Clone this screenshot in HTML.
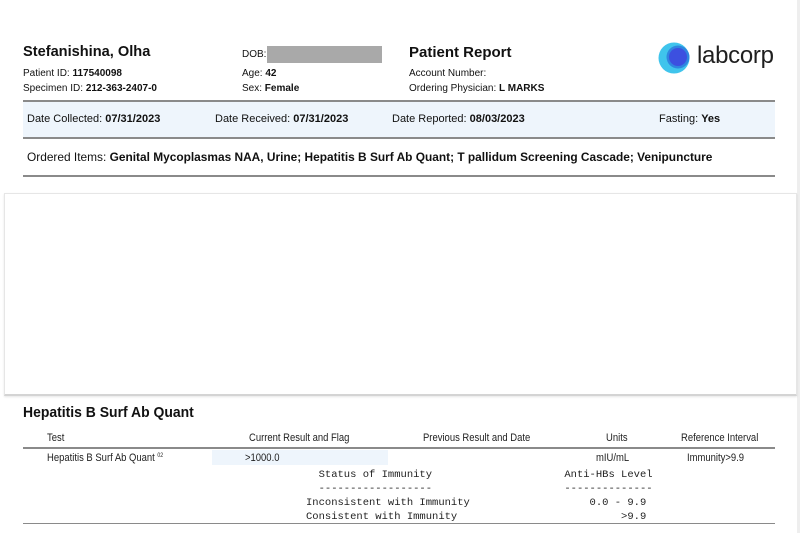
<!DOCTYPE html>
<html><head><meta charset="utf-8"><style>
*{margin:0;padding:0;box-sizing:border-box}
body{width:800px;height:533px;background:#fff;position:relative;overflow:hidden;font-family:"Liberation Sans",sans-serif;color:#111}
.a{position:absolute;white-space:nowrap}
b{font-weight:bold}
.s{font-size:10px}
.m{font-family:"Liberation Mono",monospace;font-size:10.5px;color:#222;white-space:pre}
.c{font-family:"Liberation Sans",sans-serif;font-size:11px;transform:scaleX(.86);transform-origin:left;color:#222}
.hr{position:absolute;left:23px;width:752px;height:2px;background:#8a8a8a}
</style></head><body>
<div class="a" style="right:0;top:0;width:3px;height:533px;background:#eee"></div>
<div class="a" style="left:23px;top:44px;font-size:14.6px;font-weight:bold">Stefanishina, Olha</div>
<div class="a s" style="left:23px;top:68px">Patient ID: <b>117540098</b></div>
<div class="a s" style="left:23px;top:83px">Specimen ID: <b>212-363-2407-0</b></div>
<div class="a s" style="left:242px;top:49px">DOB:</div>
<div class="a" style="left:267px;top:46px;width:115px;height:17px;background:#a9a9a9"></div>
<div class="a s" style="left:242px;top:68px">Age: <b>42</b></div>
<div class="a s" style="left:242px;top:83px">Sex: <b>Female</b></div>
<div class="a" style="left:409px;top:44px;font-size:15px;font-weight:bold">Patient Report</div>
<div class="a s" style="left:409px;top:68px">Account Number:</div>
<div class="a s" style="left:409px;top:83px">Ordering Physician: <b>L MARKS</b></div>
<svg class="a" style="left:658px;top:42px" width="34" height="34"><circle cx="16" cy="16" r="15.5" fill="#3fc4ec"/><circle cx="20" cy="15" r="11.5" fill="#2f86e0"/><circle cx="20" cy="15" r="9" fill="#3c50e0"/></svg>
<div class="a" style="left:697px;top:42px;font-size:24px;color:#1f1f1f;letter-spacing:-0.3px">labcorp</div>
<div class="hr" style="top:100px"></div>
<div class="a" style="left:23px;top:102px;width:752px;height:35px;background:#eef5fc"></div>
<div class="a" style="left:27px;top:113px;font-size:11px">Date Collected: <b>07/31/2023</b></div>
<div class="a" style="left:215px;top:113px;font-size:11px">Date Received: <b>07/31/2023</b></div>
<div class="a" style="left:392px;top:113px;font-size:11px">Date Reported: <b>08/03/2023</b></div>
<div class="a" style="left:659px;top:113px;font-size:11px">Fasting: <b>Yes</b></div>
<div class="hr" style="top:137px"></div>
<div class="a" style="left:27px;top:150px;font-size:11.9px">Ordered Items: <b>Genital Mycoplasmas NAA, Urine; Hepatitis B Surf Ab Quant; T pallidum Screening Cascade; Venipuncture</b></div>
<div class="hr" style="top:175px"></div>
<div class="a" style="left:4px;top:193px;width:793px;height:203px;border:1px solid #e6e6e6;border-bottom:2px solid #d4d4d4;box-shadow:0 1px 2px rgba(0,0,0,.1)"></div>
<div class="a" style="left:23px;top:404px;font-size:15px;font-weight:bold;transform:scaleX(.93);transform-origin:left">Hepatitis B Surf Ab Quant</div>
<div class="a c" style="left:47px;top:432px">Test</div>
<div class="a c" style="left:249px;top:432px">Current Result and Flag</div>
<div class="a c" style="left:423px;top:432px">Previous Result and Date</div>
<div class="a c" style="left:606px;top:432px">Units</div>
<div class="a c" style="left:681px;top:432px">Reference Interval</div>
<div class="hr" style="top:447px"></div>
<div class="a" style="left:212px;top:450px;width:176px;height:15px;background:#eef5fc"></div>
<div class="a c" style="left:47px;top:452px">Hepatitis B Surf Ab Quant <span style="font-size:6px;vertical-align:4px">02</span></div>
<div class="a c" style="left:245px;top:452px">&gt;1000.0</div>
<div class="a c" style="left:596px;top:452px">mIU/mL</div>
<div class="a c" style="left:687px;top:452px">Immunity&gt;9.9</div>
<div class="a m" style="left:306px;top:468px;line-height:14px">  Status of Immunity                     Anti-HBs Level
  ------------------                     --------------
Inconsistent with Immunity                   0.0 - 9.9
Consistent with Immunity                          &gt;9.9</div>
<div class="a" style="left:23px;top:523px;width:752px;height:1px;background:#8a8a8a"></div>
</body></html>
